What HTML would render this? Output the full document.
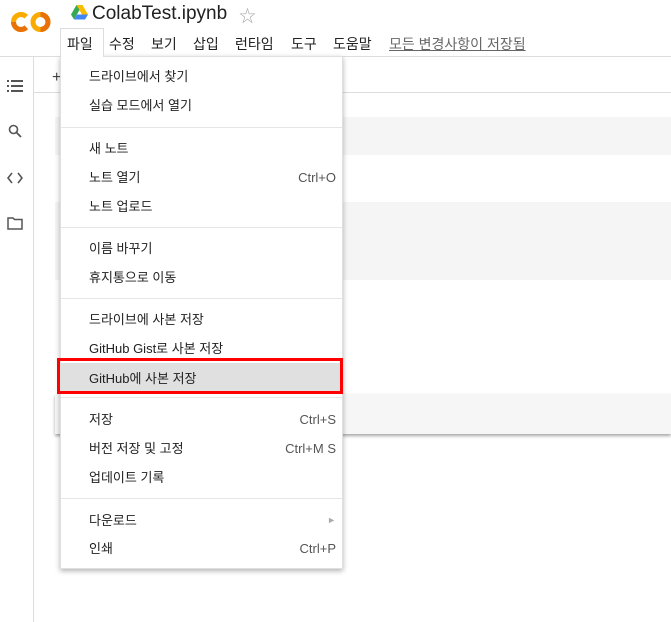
<!DOCTYPE html>
<html><head><meta charset="utf-8"><style>
*{margin:0;padding:0;box-sizing:border-box}
body{width:671px;height:622px;background:#fff;position:relative;overflow:hidden;font-family:"Liberation Sans","Noto Sans CJK KR",sans-serif;color:#212121}
.a{position:absolute}
.menu{left:60px;top:56px;width:283px;height:513px;background:#fff;box-shadow:0 2px 5px rgba(0,0,0,.3);border:1px solid #e0e0e0}
.it{position:absolute;left:28px;font-size:13px;line-height:16px;color:#212121}
.sc{position:absolute;right:6px;font-size:13px;line-height:16px;color:#555}
.sep{position:absolute;left:0;right:0;height:1px;background:#e6e6e6}
.mb{top:34px;font-size:14px;color:#212121}
</style></head><body>
<!-- logo -->
<svg class="a" style="left:10px;top:11px" width="42" height="22" viewBox="0 0 42 22">
<path d="M16.3 5.7 A7.5 7.5 0 1 0 16.3 16.3" fill="none" stroke="#f9ab00" stroke-width="5"/>
<path d="M3.5 11 A7.5 7.5 0 0 0 16.3 16.3" fill="none" stroke="#e8710a" stroke-width="5"/>
<circle cx="30.5" cy="11" r="7.5" fill="none" stroke="#f9ab00" stroke-width="5"/>
<path d="M30.5 3.5 A7.5 7.5 0 0 1 30.5 18.5" fill="none" stroke="#e8710a" stroke-width="5"/>
</svg>
<!-- drive icon -->
<svg class="a" style="left:71px;top:5px" width="17" height="15" viewBox="0 0 17 15">
<polygon points="5.5,0 11.5,0 17,9.5 11,9.5" fill="#fbbc04"/>
<polygon points="5.5,0 0,9.5 3,14.5 8.5,5" fill="#34a853"/>
<polygon points="3,14.5 14,14.5 17,9.5 6,9.5" fill="#4285f4"/>
</svg>
<div class="a" style="left:92px;top:3px;font-size:19px;color:#212121">ColabTest.ipynb</div>
<div class="a" style="left:239px;top:2px;font-size:17px;color:#aaa">☆</div>
<!-- menubar -->
<div class="a" style="left:60px;top:28px;width:44px;height:29px;border:1px solid #ddd;border-bottom:none;background:#fff;z-index:2"></div>
<div class="a mb" style="left:67px;z-index:3">파일</div>
<div class="a mb" style="left:109px">수정</div>
<div class="a mb" style="left:151px">보기</div>
<div class="a mb" style="left:193px">삽입</div>
<div class="a mb" style="left:235px">런타임</div>
<div class="a mb" style="left:291px">도구</div>
<div class="a mb" style="left:333px">도움말</div>
<div class="a mb" style="left:389px;color:#666;text-decoration:underline">모든 변경사항이 저장됨</div>
<div class="a" style="left:0;top:56px;width:671px;height:1px;background:#ddd"></div>
<!-- sidebar -->
<div class="a" style="left:33px;top:56px;width:1px;height:566px;background:#ddd"></div>
<div class="a" style="left:33px;top:92px;width:638px;height:1px;background:#ddd"></div>
<div class="a" style="left:52px;top:69px;font-size:16px;color:#444">+</div>
<svg class="a" style="left:7px;top:79px" width="16" height="14" viewBox="0 0 16 14" fill="#555">
<rect x="0" y="1" width="2" height="2"/><rect x="4" y="1" width="12" height="2"/>
<rect x="0" y="6" width="2" height="2"/><rect x="4" y="6" width="12" height="2"/>
<rect x="0" y="11" width="2" height="2"/><rect x="4" y="11" width="12" height="2"/></svg>
<svg class="a" style="left:8px;top:124px" width="14" height="14" viewBox="0 0 14 14"><circle cx="5.5" cy="5.5" r="4" fill="none" stroke="#555" stroke-width="1.6"/><path d="M8.5 8.5 L13 13" stroke="#555" stroke-width="1.8"/></svg>
<svg class="a" style="left:7px;top:172px" width="16" height="12" viewBox="0 0 16 12"><path d="M5 1 L1 6 L5 11 M11 1 L15 6 L11 11" fill="none" stroke="#555" stroke-width="1.6"/></svg>
<svg class="a" style="left:7px;top:217px" width="16" height="13" viewBox="0 0 16 13"><path d="M1 1 H6 L7.5 2.5 H15 V12 H1 Z" fill="none" stroke="#555" stroke-width="1.5"/></svg>
<!-- cells -->
<div class="a" style="left:55px;top:117px;width:616px;height:38px;background:#f5f5f5"></div>
<div class="a" style="left:55px;top:202px;width:616px;height:78px;background:#f5f5f5"></div>
<div class="a" style="left:55px;top:394px;width:616px;height:40px;background:#f6f6f6;box-shadow:0 2px 3px rgba(0,0,0,.35)"></div>
<!-- menu -->
<div class="a menu">
<div class="it" style="top:12px">드라이브에서 찾기</div>
<div class="it" style="top:41px">실습 모드에서 열기</div>
<div class="sep" style="top:70px"></div>
<div class="it" style="top:84px">새 노트</div>
<div class="it" style="top:113px">노트 열기</div><div class="sc" style="top:113px">Ctrl+O</div>
<div class="it" style="top:142px">노트 업로드</div>
<div class="sep" style="top:170px"></div>
<div class="it" style="top:184px">이름 바꾸기</div>
<div class="it" style="top:213px">휴지통으로 이동</div>
<div class="sep" style="top:241px"></div>
<div class="it" style="top:255px">드라이브에 사본 저장</div>
<div class="it" style="top:284px">GitHub Gist로 사본 저장</div>
<div class="a" style="left:0;top:306px;width:281px;height:29px;background:#e0e0e0"></div>
<div class="it" style="top:314px">GitHub에 사본 저장</div>
<div class="sep" style="top:340px"></div>
<div class="it" style="top:355px">저장</div><div class="sc" style="top:355px">Ctrl+S</div>
<div class="it" style="top:384px">버전 저장 및 고정</div><div class="sc" style="top:384px">Ctrl+M S</div>
<div class="it" style="top:413px">업데이트 기록</div>
<div class="sep" style="top:441px"></div>
<div class="it" style="top:456px">다운로드</div><div class="sc" style="top:455px;color:#aaa;font-size:9px">►</div>
<div class="it" style="top:484px">인쇄</div><div class="sc" style="top:484px">Ctrl+P</div>
</div>
<div class="a" style="left:57px;top:358px;width:286px;height:36px;border:3px solid #f00"></div>
</body></html>
